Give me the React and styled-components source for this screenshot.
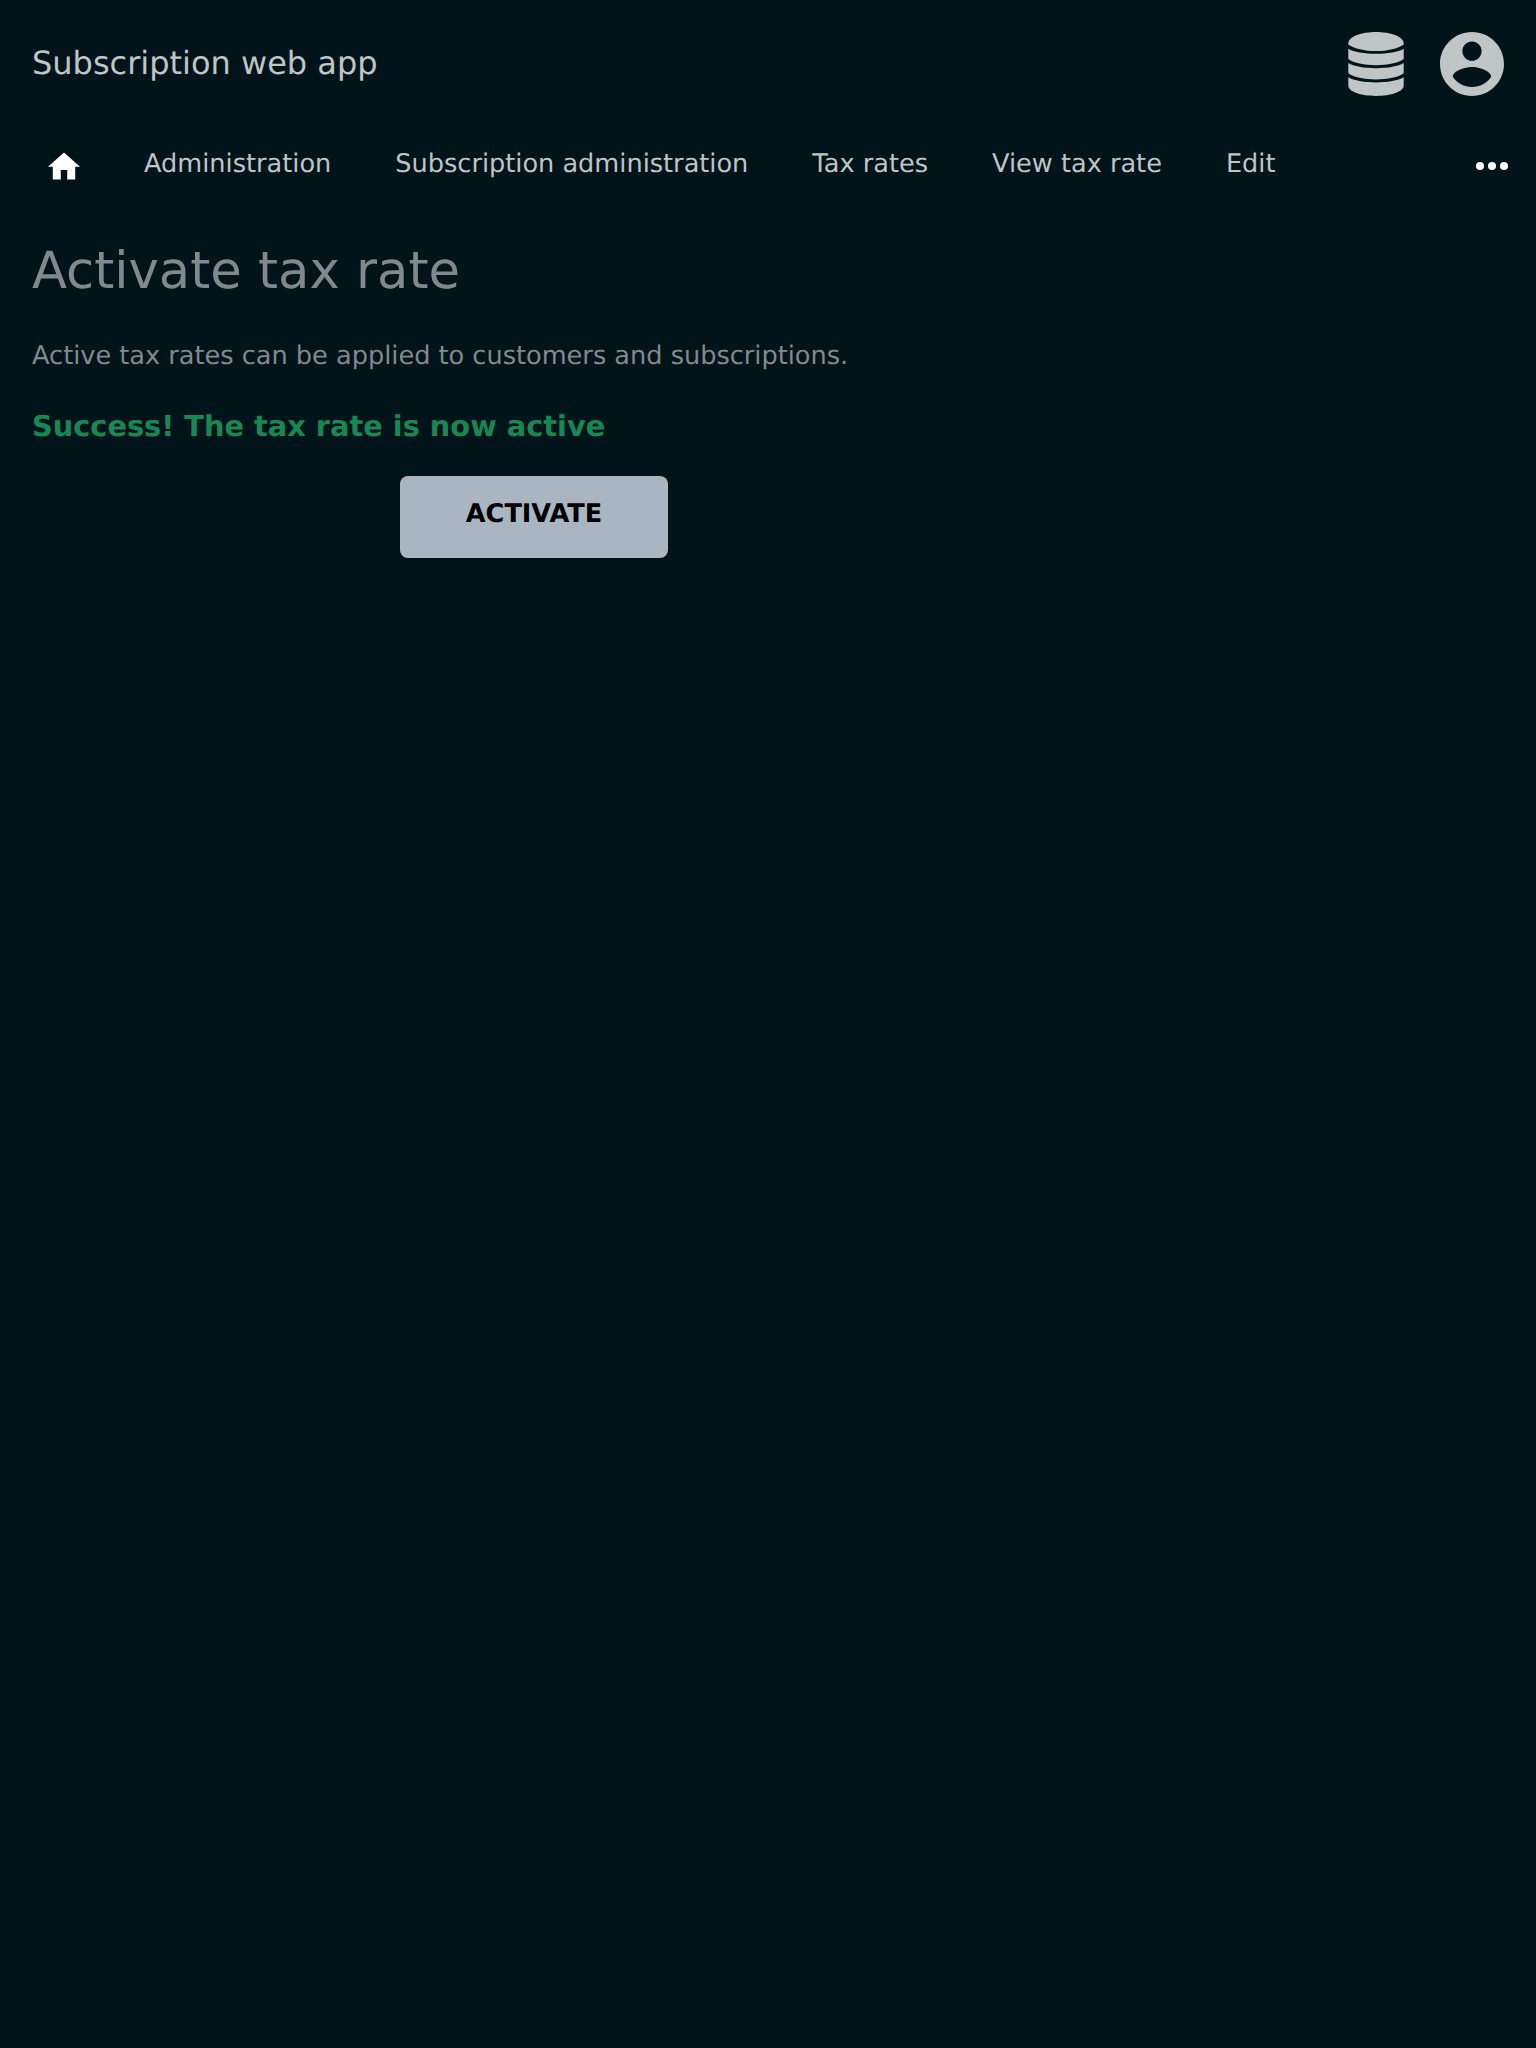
import React from 'react';
import styled, { createGlobalStyle } from 'styled-components';

const GlobalStyle = createGlobalStyle`
  html, body { margin: 0; background: #001419; }
  body { font-family: "DejaVu Sans", sans-serif; text-rendering: geometricPrecision; }
  * { box-sizing: border-box; }
`;

const Page = styled.div`
  min-height: 2048px;
  background: #001419;
  color: #bfc4c5;
`;

const Header = styled.header`
  height: 128px;
  padding: 0 32px;
  display: flex;
  align-items: center;
  justify-content: space-between;
`;

const Brand = styled.div`
  font-size: 32px;
  line-height: 40px;
  padding-bottom: 2px;
`;

const Actions = styled.div`
  display: flex;
  gap: 36px;
`;

const Icon = styled.svg`
  display: block;
  width: ${(p) => p.$w}px;
  height: ${(p) => p.$h}px;
  fill: ${(p) => p.$color || '#bfc4c5'};
`;

const Nav = styled.nav`
  height: 72px;
  padding: 0 28px 0 48px;
  display: flex;
  align-items: center;
`;

const NavItem = styled.a`
  font-size: 25.6px;
  line-height: 32px;
  margin-left: 64px;
  white-space: nowrap;
`;

const HomeLink = styled.a`
  padding-top: 4px;
`;

const MoreButton = styled.a`
  margin-left: auto;
  padding-top: 4px;
`;

const Main = styled.main`
  padding: 41px 32px;
  color: #808a8c;
`;

const Title = styled.h1`
  margin: 0;
  font-size: 51.2px;
  line-height: 60px;
  font-weight: 400;
`;

const Lead = styled.p`
  margin: 39px 0 0;
  font-size: 25.6px;
  line-height: 32px;
`;

const Success = styled.p`
  margin: 37px 0 0;
  font-size: 28.8px;
  line-height: 34px;
  font-weight: 700;
  color: #198754;
`;

const FormRow = styled.div`
  display: flex;
  padding: 33px 0 0 368px;
`;

const Button = styled.button`
  width: 268px;
  height: 82px;
  padding: 0 0 6px;
  border: 0;
  border-radius: 8px;
  background: #a9b5c0;
  color: #000;
  font: 700 25.6px/32px "DejaVu Sans", sans-serif;
  text-rendering: geometricPrecision;
`;

const LINKS = ['Administration', 'Subscription administration', 'Tax rates', 'View tax rate', 'Edit'];

export default function App() {
  return (
    <Page>
      <GlobalStyle />
      <Header>
        <Brand>Subscription web app</Brand>
        <Actions>
          <Icon $w={56} $h={64} viewBox="0 0 56 64">
            <path d="M28 0C42 0 55.7 4.4 55.7 11.4V12.4C49.5 16.5 40 19 28 19S6.5 16.5 .3 12.4V11.4C.3 4.4 14 0 28 0Z" />
            <path d="M.3 16.7C6 20 16 21.8 28 21.8S50 20 55.7 16.7V27C50 31 40 33.2 28 33.2S6 31 .3 27Z" />
            <path d="M.3 31C6 34.3 16 36.2 28 36.2S50 34.3 55.7 31V41.3C50 45.3 40 47.5 28 47.5S6 45.3 .3 41.3Z" />
            <path d="M.3 45.3C6 48.6 16 50.5 28 50.5S50 48.6 55.7 45.3V53.6C55.7 59.8 43 64 28 64S.3 59.8 .3 53.6Z" />
          </Icon>
          <Icon $w={64} $h={64} viewBox="2 2 20 20">
            <path d="M12 2C6.48 2 2 6.48 2 12s4.48 10 10 10 10-4.48 10-10S17.52 2 12 2zm0 3c1.66 0 3 1.34 3 3s-1.34 3-3 3-3-1.34-3-3 1.34-3 3-3zm0 14.2c-2.5 0-4.71-1.28-6-3.22.03-1.99 4-3.08 6-3.08 1.99 0 5.97 1.09 6 3.08-1.29 1.94-3.5 3.22-6 3.22z" />
          </Icon>
        </Actions>
      </Header>
      <Nav>
        <HomeLink>
          <Icon $w={32} $h={28} $color="#fff" viewBox="2 2.75 20 17.5">
            <path d="M10 20v-6h4v6h5v-8h3L12 3 2 12h3v8z" />
          </Icon>
        </HomeLink>
        {LINKS.map((label) => (
          <NavItem key={label}>{label}</NavItem>
        ))}
        <MoreButton>
          <Icon $w={32} $h={8} $color="#fff" viewBox="0 0 32 8">
            <circle cx="4" cy="4" r="4" />
            <circle cx="16" cy="4" r="4" />
            <circle cx="28" cy="4" r="4" />
          </Icon>
        </MoreButton>
      </Nav>
      <Main>
        <Title>Activate tax rate</Title>
        <Lead>Active tax rates can be applied to customers and subscriptions.</Lead>
        <Success>Success! The tax rate is now active</Success>
        <FormRow>
          <Button type="button">ACTIVATE</Button>
        </FormRow>
      </Main>
    </Page>
  );
}
